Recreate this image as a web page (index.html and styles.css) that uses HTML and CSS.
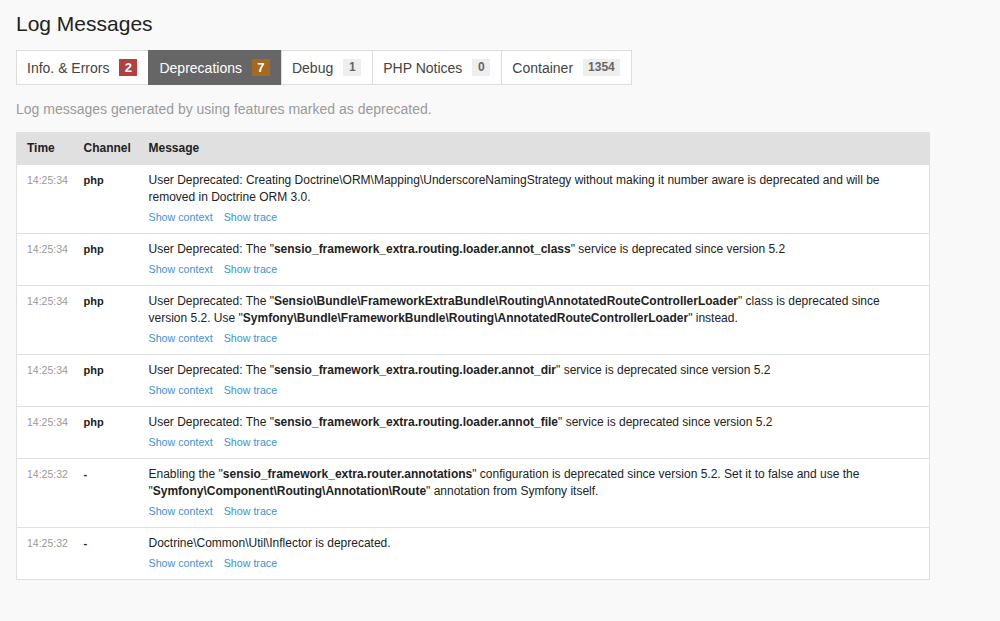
FILE: index.html
```html
<!DOCTYPE html>
<html>
<head>
<meta charset="utf-8">
<link rel="stylesheet" href="styles.css">
</head>
<body>
<h2 class="title">Log Messages</h2>
<div class="tabs">
  <div class="tab">Info. &amp; Errors <span class="badge badge-red">2</span></div>
  <div class="tab active">Deprecations <span class="badge badge-orange">7</span></div>
  <div class="tab">Debug <span class="badge">1</span></div>
  <div class="tab">PHP Notices <span class="badge">0</span></div>
  <div class="tab">Container <span class="badge">1354</span></div>
</div>
<p class="help">Log messages generated by using features marked as deprecated.</p>
<table class="logs">
  <colgroup><col class="c-time"><col class="c-chan"><col></colgroup>
  <thead>
    <tr><th>Time</th><th>Channel</th><th>Message</th></tr>
  </thead>
  <tbody>
    <tr>
      <td class="time">14:25:34</td><td class="chan">php</td>
      <td class="msg">User Deprecated: Creating Doctrine\ORM\Mapping\UnderscoreNamingStrategy without making it number aware is deprecated and will be removed in Doctrine ORM 3.0.
        <div class="links"><a>Show context</a><a>Show trace</a></div></td>
    </tr>
    <tr>
      <td class="time">14:25:34</td><td class="chan">php</td>
      <td class="msg">User Deprecated: The "<strong>sensio_framework_extra.routing.loader.annot_class</strong>" service is deprecated since version 5.2
        <div class="links"><a>Show context</a><a>Show trace</a></div></td>
    </tr>
    <tr>
      <td class="time">14:25:34</td><td class="chan">php</td>
      <td class="msg">User Deprecated: The "<strong>Sensio\Bundle\FrameworkExtraBundle\Routing\AnnotatedRouteControllerLoader</strong>" class is deprecated since version 5.2. Use "<strong>Symfony\Bundle\FrameworkBundle\Routing\AnnotatedRouteControllerLoader</strong>" instead.
        <div class="links"><a>Show context</a><a>Show trace</a></div></td>
    </tr>
    <tr>
      <td class="time">14:25:34</td><td class="chan">php</td>
      <td class="msg">User Deprecated: The "<strong>sensio_framework_extra.routing.loader.annot_dir</strong>" service is deprecated since version 5.2
        <div class="links"><a>Show context</a><a>Show trace</a></div></td>
    </tr>
    <tr>
      <td class="time">14:25:34</td><td class="chan">php</td>
      <td class="msg">User Deprecated: The "<strong>sensio_framework_extra.routing.loader.annot_file</strong>" service is deprecated since version 5.2
        <div class="links"><a>Show context</a><a>Show trace</a></div></td>
    </tr>
    <tr>
      <td class="time">14:25:32</td><td class="chan">-</td>
      <td class="msg">Enabling the "<strong>sensio_framework_extra.router.annotations</strong>" configuration is deprecated since version 5.2. Set it to false and use the "<strong>Symfony\Component\Routing\Annotation\Route</strong>" annotation from Symfony itself.
        <div class="links"><a>Show context</a><a>Show trace</a></div></td>
    </tr>
    <tr>
      <td class="time">14:25:32</td><td class="chan">-</td>
      <td class="msg">Doctrine\Common\Util\Inflector is deprecated.
        <div class="links"><a>Show context</a><a>Show trace</a></div></td>
    </tr>
  </tbody>
</table>
</body>
</html>
```
FILE: styles.css
```css
html, body {
  margin: 0;
  background: #f9f9f9;
}
body {
  padding: 0 16px;
  font-family: "Liberation Sans", Arial, sans-serif;
  color: #222;
}
.title {
  margin: 0;
  padding-top: 12px;
  font-size: 21px;
  line-height: 24px;
  font-weight: normal;
  color: #222;
}
.tabs {
  display: inline-flex;
  margin-top: 14px;
}
.tab {
  display: flex;
  align-items: center;
  gap: 10px;
  height: 33px;
  padding: 0 11px 0 10px;
  border: 1px solid #dddddd;
  background: #fff;
  font-size: 14px;
  color: #444;
}
.tab + .tab {
  margin-left: -1px;
}
.tab.active {
  background: #666;
  border-color: #666;
  color: #fff;
}
.badge {
  display: inline-block;
  min-width: 8px;
  padding: 0 5px;
  height: 17px;
  line-height: 17px;
  text-align: center;
  font-size: 12px;
  font-weight: bold;
  background: #eeeeee;
  color: #666;
}
.badge-red {
  background: #b0413e;
  color: #fff;
  font-size: 13px;
}
.badge-orange {
  background: #a46a1f;
  color: #fff;
  font-size: 13px;
}
.help {
  margin: 15px 0 0;
  font-size: 14px;
  line-height: 18px;
  color: #999;
}
.logs {
  margin-top: 14px;
  width: 914px;
  table-layout: fixed;
  border-collapse: collapse;
  background: #fff;
  border: 1px solid #e0e0e0;
}
.c-time { width: 57px; }
.c-chan { width: 65px; }
.logs th {
  background: #e0e0e0;
  text-align: left;
  font-size: 12px;
  font-weight: bold;
  line-height: 16px;
  padding: 7px 10px 8px;
  color: #222;
}
.logs td {
  vertical-align: top;
  border-top: 1px solid #e0e0e0;
  padding: 7px 10px 8px;
  font-size: 12px;
  line-height: 17px;
}
.logs td.time {
  font-size: 10.5px;
  color: #999;
}
.logs td.chan {
  font-size: 11px;
  font-weight: bold;
  color: #222;
}
.logs td.msg {
  color: #222;
}
.links {
  display: flex;
  gap: 11px;
  margin-top: 3px;
  line-height: 16px;
  font-size: 10.7px;
}
.links a {
  color: #3b94d0;
}
```
